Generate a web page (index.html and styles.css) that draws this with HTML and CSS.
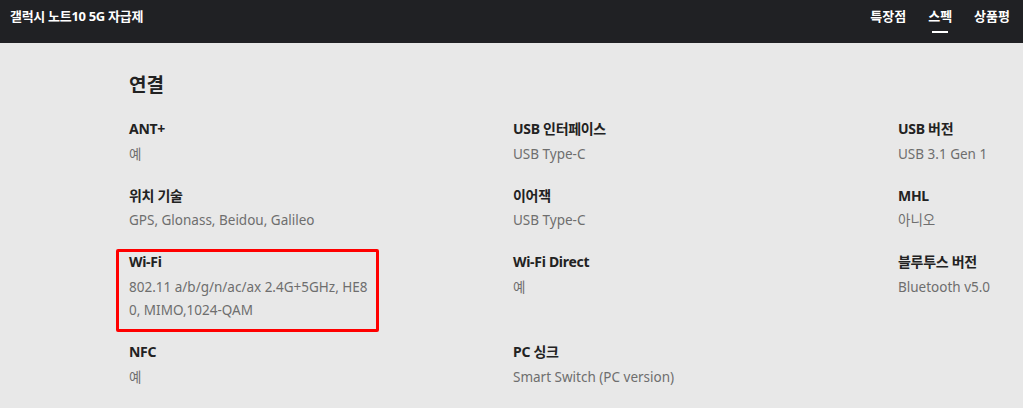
FILE: index.html
```html
<!DOCTYPE html>
<html lang="ko">
<head>
<meta charset="utf-8">
<title>갤럭시 노트10 5G 자급제 - 스펙</title>
<link rel="stylesheet" href="styles.css">
</head>
<body>
<header class="topbar">
  <div class="title">갤럭시 노트10 5G 자급제</div>
  <nav class="tabs">
    <a class="tab">특장점</a>
    <a class="tab active">스펙</a>
    <a class="tab">상품평</a>
  </nav>
</header>
<main class="content">
  <h2 class="section-title">연결</h2>
  <div class="spec-grid">
    <div class="spec"><div class="label">ANT+</div><div class="value">예</div></div>
    <div class="spec"><div class="label">USB 인터페이스</div><div class="value">USB Type-C</div></div>
    <div class="spec"><div class="label">USB 버전</div><div class="value">USB 3.1 Gen 1</div></div>

    <div class="spec"><div class="label">위치 기술</div><div class="value">GPS, Glonass, Beidou, Galileo</div></div>
    <div class="spec"><div class="label">이어잭</div><div class="value">USB Type-C</div></div>
    <div class="spec"><div class="label">MHL</div><div class="value">아니오</div></div>

    <div class="spec highlighted"><div class="label">Wi-Fi</div><div class="value">802.11 a/b/g/n/ac/ax 2.4G+5GHz, HE80, MIMO,1024-QAM</div><div class="mark"></div></div>
    <div class="spec"><div class="label">Wi-Fi Direct</div><div class="value">예</div></div>
    <div class="spec"><div class="label">블루투스 버전</div><div class="value">Bluetooth v5.0</div></div>

    <div class="spec"><div class="label">NFC</div><div class="value">예</div></div>
    <div class="spec"><div class="label">PC 싱크</div><div class="value">Smart Switch (PC version)</div></div>
  </div>
</main>
</body>
</html>
```
FILE: styles.css
```css
* { box-sizing: border-box; }
html, body { margin: 0; padding: 0; }
body {
  background: #e8e8e8;
  font-family: "Noto Sans", "Noto Sans CJK KR", sans-serif;
  overflow: hidden;
  width: 1023px;
  height: 408px;
}
.topbar {
  height: 43px;
  background: #202124;
  display: flex;
  align-items: flex-start;
  justify-content: space-between;
  padding: 0 13px 0 10px;
}
.title {
  color: #fff;
  font-weight: 700;
  font-size: 13px;
  line-height: 16px;
  padding-top: 8px;
  letter-spacing: -0.3px;
}
.tabs {
  display: flex;
  gap: 22px;
}
.tab {
  color: #fff;
  font-weight: 700;
  font-size: 13px;
  line-height: 16px;
  padding-top: 8px;
  height: 34px;
  position: relative;
  display: flex;
  justify-content: center;
}
.tab.active::after {
  content: "";
  position: absolute;
  bottom: 1px;
  width: 16px;
  height: 2px;
  background: #fff;
}
.content {
  padding: 27px 0 0 129px;
  width: 1023px;
  overflow: hidden;
}
.section-title {
  margin: 0 0 17px;
  font-size: 19px;
  line-height: 30px;
  font-weight: 700;
  color: #222;
}
.spec-grid {
  display: grid;
  grid-template-columns: 384px 385px 125px;
  row-gap: 17.5px;
}
.spec { position: relative; }
.label {
  font-size: 14px;
  font-weight: 700;
  line-height: 24px;
  color: #222;
  letter-spacing: -0.3px;
  white-space: nowrap;
}
.value {
  font-size: 13.5px;
  line-height: 23.5px;
  color: #6e6e6e;
  width: 244px;
  word-break: break-all;
  margin-top: 1.5px;
}
.spec-grid > .spec:nth-child(3n) .value { white-space: nowrap; width: auto; }
.mark {
  position: absolute;
  left: -13px;
  top: -1px;
  width: 263px;
  height: 83px;
  border: 3px solid #ff0000;
  border-radius: 2px;
}
```
